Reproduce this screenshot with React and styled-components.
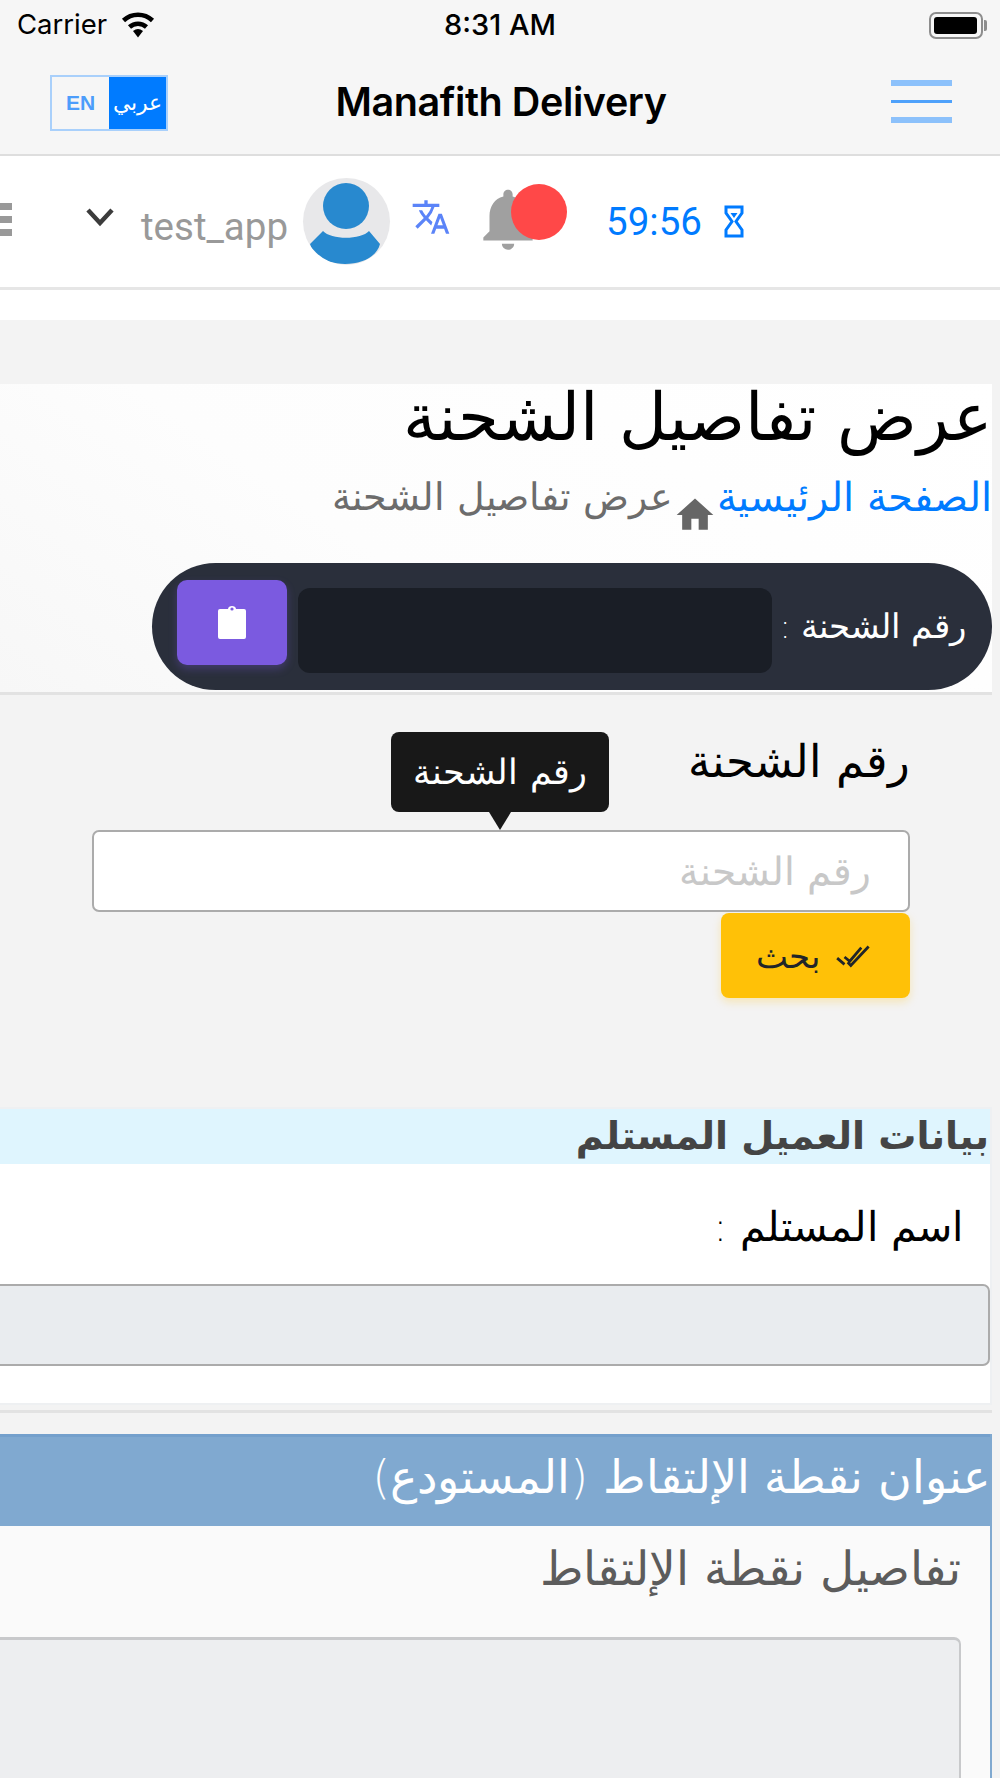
import React from "react";
import styled, { createGlobalStyle } from "styled-components";
import { MdTranslate, MdNotifications, MdHome } from "react-icons/md";

const thinFont = `"DejaVu Sans ExtraLight", "DejaVu Sans Light", "DejaVu Sans", sans-serif`;

const GlobalStyle = createGlobalStyle`
  html, body {
    margin: 0;
    padding: 0;
    background: #f3f3f3;
    overflow: hidden;
  }
  body {
    font-family: "DejaVu Sans", sans-serif;
    width: 1000px;
    height: 1778px;
  }
  * { box-sizing: border-box; }
`;

const Page = styled.div`
  width: 1000px;
  height: 1778px;
  overflow: hidden;
`;

const TopArea = styled.header`
  height: 156px;
  background: #f6f6f6;
  border-bottom: 2px solid #dedede;
`;

const StatusBar = styled.div`
  height: 50px;
  padding: 0 17px 2px 17px;
  display: grid;
  grid-template-columns: 1fr auto 1fr;
  align-items: center;
  font-family: "Inter", sans-serif;
  font-size: 27.5px;
  color: #000;
`;

const Carrier = styled.div`
  display: flex;
  align-items: center;
  gap: 13px;
`;

const Clock = styled.div`
  font-size: 29px;
  font-weight: 500;
`;

const Battery = styled.div`
  position: relative;
  justify-self: end;
  width: 54px;
  height: 27px;
  margin-top: 2px;
  border: 2px solid #8d8d8d;
  border-radius: 7px;
  padding: 3px 4px 3px 3px;
  & > div {
    width: 100%;
    height: 100%;
    background: #000;
    border-radius: 3px;
  }
  &::after {
    content: "";
    position: absolute;
    right: -6px;
    top: 6px;
    width: 3px;
    height: 11px;
    background: #8d8d8d;
    border-radius: 0 2px 2px 0;
  }
`;

const NavBar = styled.div`
  height: 104px;
  padding: 0 48px 0 50px;
  padding-top: 3px;
  display: grid;
  grid-template-columns: 1fr auto 1fr;
  align-items: center;
`;

const LangSwitch = styled.div`
  display: flex;
  width: 118px;
  height: 56px;
  margin-top: -2px;
  border: 2px solid #a9d0fb;
  font-family: "Liberation Sans", sans-serif;
  font-size: 20px;
`;

const LangOption = styled.div`
  flex: 1;
  display: flex;
  align-items: center;
  justify-content: center;
  font-size: ${(p) => (p.$active ? 22 : 21)}px;
  font-weight: ${(p) => (p.$active ? 400 : 700)};
  color: ${(p) => (p.$active ? "#fff" : "#4c9dfb")};
  background: ${(p) => (p.$active ? "#007bff" : "transparent")};
`;

const NavTitle = styled.div`
  font-family: "Inter", sans-serif;
  font-size: 39.5px;
  font-weight: 600;
  color: #000;
  margin-top: -4px;
  letter-spacing: -0.4px;
`;

const Burger = styled.div`
  justify-self: end;
  width: 61px;
  margin-top: -4px;
  display: flex;
  flex-direction: column;
  gap: 14px;
`;

const BurgerLine = styled.div`
  height: ${(p) => (p.$thin ? 3 : 6)}px;
  background: ${(p) => (p.$thin ? "#4ea1fb" : "#8cc1fb")};
`;

const UserBar = styled.div`
  height: 134px;
  background: #fff;
  border-bottom: 3px solid #e6e6e6;
  display: flex;
  align-items: center;
  color: #999;
`;

const SideToggle = styled.div`
  width: 12px;
  margin-top: -4px;
  display: flex;
  flex-direction: column;
  gap: 6px;
  & > i {
    display: block;
    height: 7px;
    background: #999;
  }
`;

const Chevron = styled.svg`
  width: 30px;
  height: 20px;
  margin-left: 73px;
  margin-top: -10px;
`;

const UserName = styled.div`
  font-family: "Roboto", sans-serif;
  font-size: 38.5px;
  color: #999;
  margin-left: 26px;
  margin-top: 10px;
`;

const Avatar = styled.div`
  width: 87px;
  height: 87px;
  margin-left: 15px;
  margin-top: -1px;
  border-radius: 50%;
  background: #e8e8ea;
  overflow: hidden;
  & > svg { display: block; }
`;

const Translate = styled(MdTranslate)`
  width: 40px;
  height: 40px;
  color: #5b84f8;
  margin-left: 21px;
  margin-top: -10px;
`;

const BellWrap = styled.div`
  position: relative;
  width: 60px;
  height: 60px;
  margin-left: 27px;
  margin-top: -6px;
`;

const Bell = styled(MdNotifications)`
  width: 74px;
  height: 74px;
  margin: -7px;
  color: #a0a0a0;
  display: block;
`;

const BellDot = styled.div`
  position: absolute;
  left: 33px;
  top: -5px;
  width: 56px;
  height: 56px;
  border-radius: 50%;
  background: #ff4848;
`;

const Countdown = styled.div`
  font-family: "Roboto", sans-serif;
  font-size: 38.5px;
  color: #007bff;
  margin-left: 68px;
  margin-top: 0;
`;

const Hourglass = styled.svg`
  width: 20px;
  height: 33px;
  margin-left: 22px;
  margin-top: 0;
`;

const WhiteGap = styled.div`
  height: 30px;
  background: #fff;
`;

const Main = styled.main`
  direction: rtl;
  padding: 66px 8px 0 0;
  font-family: ${thinFont};
`;

const PageHead = styled.section`
  height: 311px;
  background: linear-gradient(215deg, #ffffff 0%, #fdfdfd 60%, #f7f7f7 100%);
  border-bottom: 3px solid #e2e2e2;
  position: relative;
`;

const PageTitle = styled.h1`
  margin: 0;
  font-size: 66px;
  font-weight: 200;
  line-height: 68px;
  color: #000;
  text-align: right;
  margin-top: -2px;
`;

const Crumbs = styled.nav`
  display: flex;
  align-items: center;
  margin-top: 16px;
  height: 58px;
  font-size: 38px;
  font-weight: 200;
  color: #6c6c6c;
`;

const CrumbLink = styled.span`
  color: #007bff;
  font-size: 39.7px;
`;

const HomeIcon = styled(MdHome)`
  width: 44px;
  height: 44px;
  color: #666;
  margin-top: 36px;
`;

const ShipmentPill = styled.div`
  margin-top: 37px;
  margin-left: 152px;
  height: 127px;
  border-radius: 64px;
  background: #2a2f3b;
  display: flex;
  align-items: center;
  padding: 0 26px 0 25px;
`;

const PillLabel = styled.div`
  font-size: 33.5px;
  font-weight: 200;
  color: #fff;
  white-space: nowrap;
  flex: none;
  width: 194px;
`;

const PillField = styled.div`
  width: 474px;
  height: 85px;
  margin-top: 7px;
  background: #1a1e26;
  border-radius: 12px;
`;

const ClipButton = styled.div`
  width: 110px;
  height: 85px;
  margin-right: 11px;
  margin-top: -9px;
  background: #7b5ae0;
  border-radius: 10px;
  box-shadow: 0 4px 8px rgba(123, 90, 224, 0.3);
  display: flex;
  align-items: center;
  justify-content: center;
`;

const SearchForm = styled.section`
  padding: 0 82px 0 92px;
  height: 412px;
`;

const FieldLabel = styled.label`
  display: block;
  font-size: 45px;
  font-weight: 200;
  color: #000;
  line-height: 50px;
  padding-top: 42px;
  height: 135px;
`;

const InputWrap = styled.div`
  position: relative;
`;

const Tooltip = styled.div`
  position: absolute;
  top: -98px;
  left: 299px;
  width: 218px;
  height: 80px;
  background: #181818;
  border-radius: 8px;
  color: #fff;
  font-size: 35px;
  font-weight: 200;
  display: flex;
  align-items: center;
  justify-content: center;
  &::after {
    content: "";
    position: absolute;
    bottom: -18px;
    left: 50%;
    margin-left: -11px;
    border-top: 18px solid #181818;
    border-left: 11px solid transparent;
    border-right: 11px solid transparent;
  }
`;

const TextInput = styled.div`
  height: 82px;
  background: #fff;
  border: 2px solid #ababab;
  border-radius: 7px;
  padding: 0 37px;
  display: flex;
  align-items: center;
  font-size: 39px;
  font-weight: 200;
  color: #c8c8c8;
`;

const ReadOnlyInput = styled(TextInput)`
  background: #e9ecef;
  margin-left: -20px;
`;

const SearchButton = styled.div`
  width: 189px;
  height: 85px;
  margin-top: 1px;
  background: #ffc107;
  border-radius: 8px;
  box-shadow: 0 4px 8px rgba(255, 193, 7, 0.25);
  display: flex;
  align-items: center;
  justify-content: center;
  gap: 14px;
  font-size: 34px;
  font-weight: 200;
  color: #212529;
`;

const CheckIcon = styled.svg`
  width: 42px;
  height: 28px;
`;

const Card = styled.section`
  height: 298px;
  background: #fff;
  border: 2px solid #eef0f2;
  border-left: 0;
`;

const CardHead = styled.h2`
  margin: 0;
  height: 55px;
  background: #dff5fe;
  font-family: "DejaVu Sans", sans-serif;
  font-size: 38px;
  line-height: 55px;
  font-weight: 700;
  color: #444;
  text-align: right;
  padding-right: 1px;
`;

const CardLabel = styled.div`
  font-size: 40.5px;
  font-weight: 200;
  color: #000;
  line-height: 50px;
  padding: 38px 27px 0 0;
  height: 120px;
`;

const Divider = styled.div`
  height: 3px;
  background: #e2e2e2;
  margin: 5px 0 21px;
`;

const Panel = styled.section`
  height: 400px;
  background: #fafafa;
  border-right: 2px solid #80a9d0;
`;

const PanelHead = styled.h2`
  margin: 0;
  height: 92px;
  background: #80a9d0;
  border-top: 3px solid #74a0cc;
  font-size: 46px;
  line-height: 80px;
  font-weight: 200;
  color: #fff;
  text-align: right;
`;

const PanelLabel = styled.div`
  font-size: 47px;
  font-weight: 200;
  color: #5c5c5c;
  line-height: 50px;
  padding: 18px 29px 0 0;
  height: 111px;
`;

const TextArea = styled.div`
  height: 200px;
  margin-right: 29px;
  margin-left: -40px;
  background: #edeef0;
  border: 2px solid #c8c9cb;
  border-top-width: 3px;
  border-radius: 7px 7px 0 0;
`;

export default function App() {
  return (
    <Page>
      <GlobalStyle />
      <TopArea>
        <StatusBar>
          <Carrier>
            Carrier
            <svg width="36" height="27" viewBox="0 0 36 27">
              <path d="M18 26.5 L13 20 A8 8 0 0 1 23 20 Z" fill="#000" />
              <path d="M9.5 16 A12.5 12.5 0 0 1 26.5 16" fill="none" stroke="#000" strokeWidth="4.5" />
              <path d="M3.5 9.5 A21 21 0 0 1 32.5 9.5" fill="none" stroke="#000" strokeWidth="4.5" />
            </svg>
          </Carrier>
          <Clock>8:31 AM</Clock>
          <Battery><div /></Battery>
        </StatusBar>
        <NavBar>
          <LangSwitch>
            <LangOption>EN</LangOption>
            <LangOption $active>عربي</LangOption>
          </LangSwitch>
          <NavTitle>Manafith Delivery</NavTitle>
          <Burger>
            <BurgerLine />
            <BurgerLine $thin />
            <BurgerLine />
          </Burger>
        </NavBar>
      </TopArea>

      <UserBar>
        <SideToggle><i /><i /><i /></SideToggle>
        <Chevron viewBox="0 0 30 20">
          <path d="M3 3 L15 16 L27 3" fill="none" stroke="#3c3c3c" strokeWidth="4.5" />
        </Chevron>
        <UserName>test_app</UserName>
        <Avatar>
          <svg width="87" height="87" viewBox="0 0 87 87">
            <circle cx="43" cy="28" r="23" fill="#2889cf" />
            <path d="M7 66 L20 53 C28 62 58 62 66 53 L77 66 C74 78 60 86 42 86 C25 86 10 78 7 66 Z" fill="#2889cf" />
          </svg>
        </Avatar>
        <Translate />
        <BellWrap>
          <Bell />
          <BellDot />
        </BellWrap>
        <Countdown>59:56</Countdown>
        <Hourglass viewBox="0 0 20 33">
          <path d="M2 2 H18 V8 L12 16.5 L18 25 V31 H2 V25 L8 16.5 L2 8 Z" fill="none" stroke="#007bff" strokeWidth="3" />
          <path d="M6.5 8 H13.5 L10 13 Z" fill="#007bff" />
        </Hourglass>
      </UserBar>
      <WhiteGap />

      <Main>
        <PageHead>
          <PageTitle>عرض تفاصيل الشحنة</PageTitle>
          <Crumbs>
            <CrumbLink>الصفحة الرئيسية</CrumbLink>
            <HomeIcon />
            <span>عرض تفاصيل الشحنة</span>
          </Crumbs>
          <ShipmentPill>
            <PillLabel>رقم الشحنة :</PillLabel>
            <PillField />
            <ClipButton>
              <svg width="30" height="36" viewBox="0 0 30 36">
                <path d="M3 5 H11 C11 1 19 1 19 5 H27 A2 2 0 0 1 29 7 V33 A2 2 0 0 1 27 35 H3 A2 2 0 0 1 1 33 V7 A2 2 0 0 1 3 5 Z" fill="#fff" />
                <circle cx="15" cy="5" r="1.6" fill="#7b5ae0" />
              </svg>
            </ClipButton>
          </ShipmentPill>
        </PageHead>

        <SearchForm>
          <FieldLabel>رقم الشحنة</FieldLabel>
          <InputWrap>
            <Tooltip>رقم الشحنة</Tooltip>
            <TextInput>رقم الشحنة</TextInput>
          </InputWrap>
          <SearchButton>
            <CheckIcon viewBox="0 0 40 26">
              <path d="M3 15 L10 21 M13 19 L16 22 L33 4 M10 14 L15 18 L26 5" fill="none" stroke="#212529" strokeWidth="2.6" />
            </CheckIcon>
            <span>بحث</span>
          </SearchButton>
        </SearchForm>

        <Card>
          <CardHead>بيانات العميل المستلم</CardHead>
          <CardLabel>اسم المستلم :</CardLabel>
          <ReadOnlyInput />
        </Card>
        <Divider />

        <Panel>
          <PanelHead>عنوان نقطة الإلتقاط (المستودع)</PanelHead>
          <PanelLabel>تفاصيل نقطة الإلتقاط</PanelLabel>
          <TextArea />
        </Panel>
      </Main>
    </Page>
  );
}
